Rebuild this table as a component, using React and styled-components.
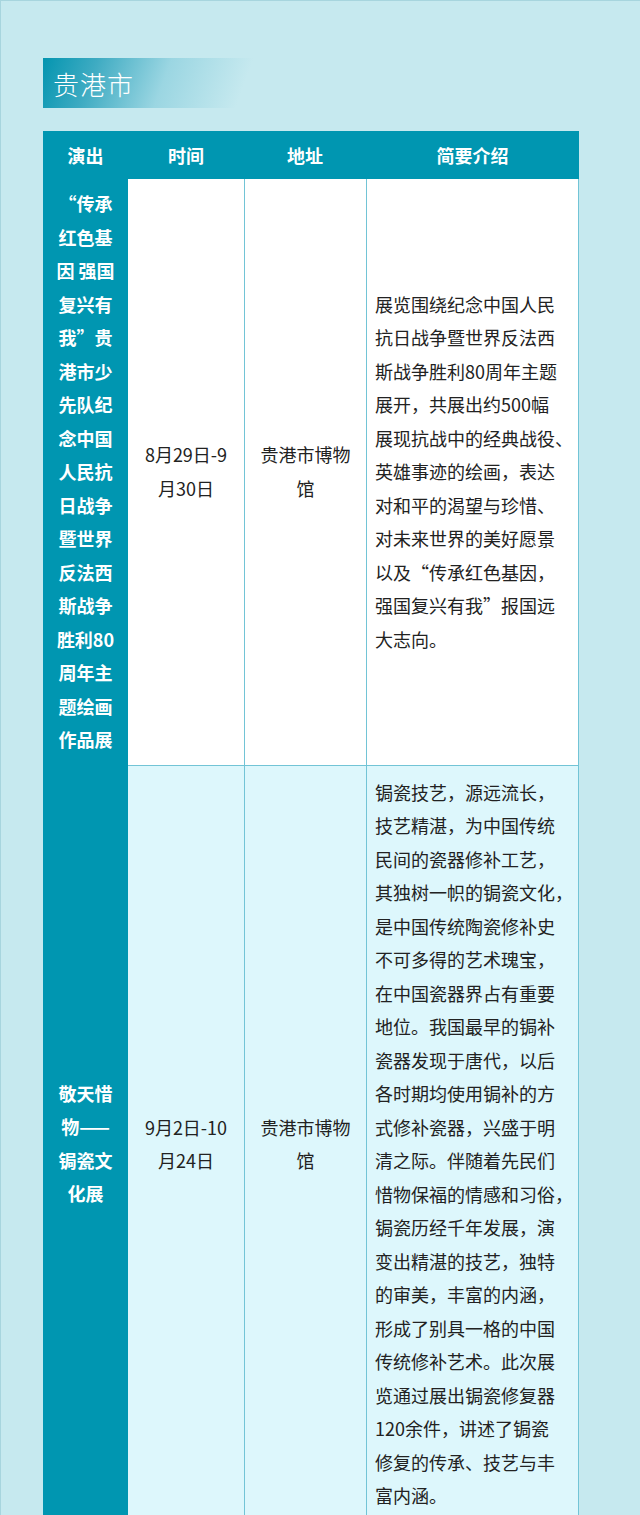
import styled, { createGlobalStyle } from "styled-components";

const GlobalStyle = createGlobalStyle`
    html, body {
        margin: 0;
        padding: 0;
        background: #c6e9ef;
    }
    * {
        box-sizing: border-box;
    }
`;

const COLS = "85px 116px 122px 213px";

const Page = styled.div`
    min-height: 1515px;
    padding: 57px 0 0 42px;
    border-top: 1px solid #a7d5de;
    border-left: 1px solid #a7d5de;
    font-family: "Noto Sans CJK SC", "Noto Sans", sans-serif;
`;

const Banner = styled.div`
    width: 230px;
    height: 50px;
    display: flex;
    align-items: center;
    padding-left: 10px;
    background: linear-gradient(
        110deg,
        #0495b0 0%,
        #3eabc2 22%,
        #9bd6e2 52%,
        rgba(198, 233, 239, 0) 85%
    );
`;

const BannerTitle = styled.h1`
    margin: 0;
    color: #fff;
    font-size: 26px;
    font-weight: 300;
    letter-spacing: 1px;
`;

const Table = styled.div`
    width: 536px;
    margin-top: 23px;
`;

const HeaderRow = styled.div`
    display: grid;
    grid-template-columns: ${COLS};
    height: 48px;
    background: #0096b1;
`;

const HeaderCell = styled.div`
    display: flex;
    align-items: center;
    justify-content: center;
    color: #fff;
    font-size: 18px;
    font-weight: bold;
`;

const Row = styled.div`
    display: grid;
    grid-template-columns: ${COLS};
    background: ${(p) => p.$bg};
`;

const TitleCell = styled.div`
    display: flex;
    align-items: center;
    justify-content: center;
    padding: ${(p) => (p.$pad ? "8px 0" : "0")};
    background: #0096b1;
    color: #fff;
    font-size: 18px;
    font-weight: bold;
    line-height: 33.5px;
    text-align: center;
    white-space: nowrap;
`;

const InfoCell = styled.div`
    display: flex;
    align-items: center;
    justify-content: center;
    text-align: center;
    color: #222;
    font-size: 18px;
    line-height: 33.5px;
    white-space: nowrap;
    border-top: ${(p) => (p.$first ? "none" : "1px solid #72c4d6")};
    border-left: ${(p) => (p.$divider ? "1px solid #72c4d6" : "none")};
`;

const DescCell = styled.div`
    display: flex;
    flex-direction: column;
    justify-content: center;
    padding: 10px 0 10px 8px;
    color: #222;
    font-size: 18px;
    line-height: 33.5px;
    white-space: nowrap;
    border-top: ${(p) => (p.$first ? "none" : "1px solid #72c4d6")};
    border-left: 1px solid #72c4d6;
    border-right: 1px solid #72c4d6;
`;

const Lines = ({ lines }) =>
    lines.map((line, i) => (
        <span key={i}>
            {line}
            {i < lines.length - 1 && <br />}
        </span>
    ));

const rows = [
    {
        bg: "#ffffff",
        title: [
            "“传承",
            "红色基",
            "因 强国",
            "复兴有",
            "我”贵",
            "港市少",
            "先队纪",
            "念中国",
            "人民抗",
            "日战争",
            "暨世界",
            "反法西",
            "斯战争",
            "胜利80",
            "周年主",
            "题绘画",
            "作品展",
        ],
        time: ["8月29日-9", "月30日"],
        place: ["贵港市博物", "馆"],
        desc: [
            "展览围绕纪念中国人民",
            "抗日战争暨世界反法西",
            "斯战争胜利80周年主题",
            "展开，共展出约500幅",
            "展现抗战中的经典战役、",
            "英雄事迹的绘画，表达",
            "对和平的渴望与珍惜、",
            "对未来世界的美好愿景",
            "以及“传承红色基因，",
            "强国复兴有我”报国远",
            "大志向。",
        ],
    },
    {
        bg: "#ddf7fc",
        title: ["敬天惜", "物——", "锔瓷文", "化展"],
        time: ["9月2日-10", "月24日"],
        place: ["贵港市博物", "馆"],
        desc: [
            "锔瓷技艺，源远流长，",
            "技艺精湛，为中国传统",
            "民间的瓷器修补工艺，",
            "其独树一帜的锔瓷文化，",
            "是中国传统陶瓷修补史",
            "不可多得的艺术瑰宝，",
            "在中国瓷器界占有重要",
            "地位。我国最早的锔补",
            "瓷器发现于唐代，以后",
            "各时期均使用锔补的方",
            "式修补瓷器，兴盛于明",
            "清之际。伴随着先民们",
            "惜物保福的情感和习俗，",
            "锔瓷历经千年发展，演",
            "变出精湛的技艺，独特",
            "的审美，丰富的内涵，",
            "形成了别具一格的中国",
            "传统修补艺术。此次展",
            "览通过展出锔瓷修复器",
            "120余件，讲述了锔瓷",
            "修复的传承、技艺与丰",
            "富内涵。",
        ],
    },
];

const headers = ["演出", "时间", "地址", "简要介绍"];

const App = () => (
    <>
        <GlobalStyle />
        <Page>
            <Banner>
                <BannerTitle>贵港市</BannerTitle>
            </Banner>
            <Table>
                <HeaderRow>
                    {headers.map((h) => (
                        <HeaderCell key={h}>{h}</HeaderCell>
                    ))}
                </HeaderRow>
                {rows.map((row, index) => (
                    <Row key={index} $bg={row.bg}>
                        <TitleCell $pad={index === 0}>
                            <div>
                                <Lines lines={row.title} />
                            </div>
                        </TitleCell>
                        <InfoCell $first={index === 0}>
                            <div>
                                <Lines lines={row.time} />
                            </div>
                        </InfoCell>
                        <InfoCell $first={index === 0} $divider>
                            <div>
                                <Lines lines={row.place} />
                            </div>
                        </InfoCell>
                        <DescCell $first={index === 0}>
                            <div>
                                <Lines lines={row.desc} />
                            </div>
                        </DescCell>
                    </Row>
                ))}
            </Table>
        </Page>
    </>
);

export default App;
